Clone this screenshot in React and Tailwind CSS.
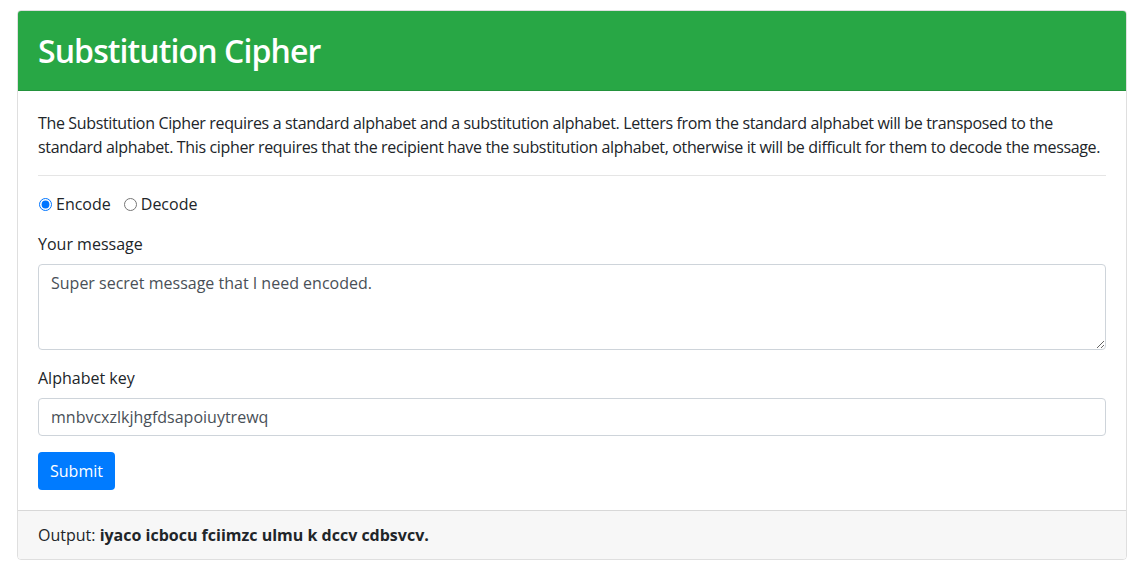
import { useState } from 'react';

export default function App() {
    const [mode, setMode] = useState('encode');
    const [message, setMessage] = useState('Super secret message that I need encoded.');
    const [key, setKey] = useState('mnbvcxzlkjhgfdsapoiuytrewq');

    return (
        <div className="min-h-screen bg-white text-[#212529] text-base leading-6" style={{ fontFamily: '"Open Sans", "Noto Sans", Arial, sans-serif' }}>
            <div className="max-w-[1140px] mx-auto px-[15px]">
                {/* Card */}
                <div className="mt-[10px] border border-black/[0.125] rounded-[4px] overflow-hidden">
                    {/* Header */}
                    <div className="bg-[#28a745] text-white px-5 pt-4 pb-[15px] border-b border-black/[0.125]">
                        <h1 className="text-[32px] leading-[48px] font-semibold tracking-[-0.9px]">Substitution Cipher</h1>
                    </div>

                    {/* Body */}
                    <div className="p-5">
                        <p className="mb-4 tracking-[-0.35px]">
                            The Substitution Cipher requires a standard alphabet and a substitution alphabet. Letters from the standard alphabet will be transposed to the standard alphabet. This cipher requires that the recipient have the substitution alphabet, otherwise it will be difficult for them to decode the message.
                        </p>
                        <hr className="border-0 border-t border-black/10 mb-4" />

                        <form onSubmit={(e) => e.preventDefault()}>
                            <div className="flex items-center mb-4 h-6">
                                <label className="inline-flex items-center mr-[12px]">
                                    <input
                                        type="radio"
                                        name="mode"
                                        checked={mode === 'encode'}
                                        onChange={() => setMode('encode')}
                                        className="w-[13px] h-[13px] ml-[1px] mr-[4px] accent-[#0075ff]"
                                    />
                                    Encode
                                </label>
                                <label className="inline-flex items-center">
                                    <input
                                        type="radio"
                                        name="mode"
                                        checked={mode === 'decode'}
                                        onChange={() => setMode('decode')}
                                        className="w-[13px] h-[13px] ml-[1px] mr-[4px] accent-[#0075ff]"
                                    />
                                    Decode
                                </label>
                            </div>

                            <div className="mb-4">
                                <label className="block mb-2">Your message</label>
                                <textarea
                                    rows={3}
                                    value={message}
                                    onChange={(e) => setMessage(e.target.value)}
                                    className="block w-full h-[86px] px-3 py-[6px] border border-[#ced4da] rounded-[4px] text-[#495057] leading-6 outline-none"
                                />
                            </div>

                            <div className="mb-4">
                                <label className="block mb-2">Alphabet key</label>
                                <input
                                    type="text"
                                    value={key}
                                    onChange={(e) => setKey(e.target.value)}
                                    className="block w-full h-[38px] px-3 py-[6px] border border-[#ced4da] rounded-[4px] text-[#495057] leading-6 outline-none"
                                />
                            </div>

                            <button type="submit" className="bg-[#007bff] text-white px-3 py-[6px] rounded-[4px] leading-6 h-[38px]">
                                Submit
                            </button>
                        </form>
                    </div>

                    {/* Footer */}
                    <div className="bg-[#f7f7f7] border-t border-black/[0.125] px-5 py-3">
                        Output: <strong className="font-bold">iyaco icbocu fciimzc ulmu k dccv cdbsvcv.</strong>
                    </div>
                </div>
            </div>
        </div>
    );
}
